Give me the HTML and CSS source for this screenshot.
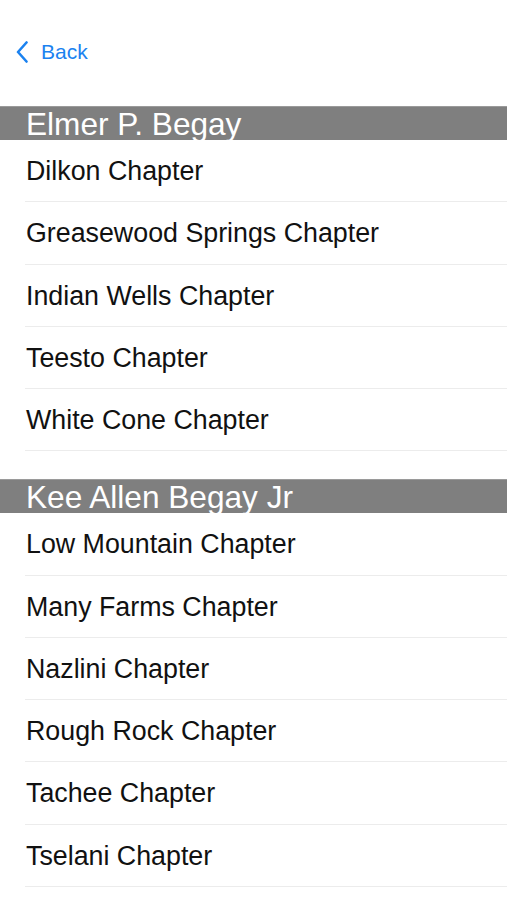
FILE: index.html
```html
<!DOCTYPE html>
<html>
<head>
<meta charset="utf-8">
<link rel="stylesheet" href="styles.css">
</head>
<body>
<div class="nav">
  <a class="back">
    <svg class="chev" width="12" height="22" viewBox="0 0 12 22"><path d="M10.5 1.5 L2 11 L10.5 20.5" fill="none" stroke="#1b82f0" stroke-width="2.6" stroke-linecap="round" stroke-linejoin="round"/></svg>
    <span>Back</span>
  </a>
</div>
<div class="section">
  <div class="header">Elmer P. Begay</div>
  <div class="row">Dilkon Chapter</div>
  <div class="row">Greasewood Springs Chapter</div>
  <div class="row">Indian Wells Chapter</div>
  <div class="row">Teesto Chapter</div>
  <div class="row">White Cone Chapter</div>
</div>
<div class="section">
  <div class="header">Kee Allen Begay Jr</div>
  <div class="row">Low Mountain Chapter</div>
  <div class="row">Many Farms Chapter</div>
  <div class="row">Nazlini Chapter</div>
  <div class="row">Rough Rock Chapter</div>
  <div class="row">Tachee Chapter</div>
  <div class="row">Tselani Chapter</div>
</div>
</body>
</html>
```
FILE: styles.css
```css
html, body {
  margin: 0;
  padding: 0;
  background: #ffffff;
  font-family: "Liberation Sans", Arial, sans-serif;
}
.nav {
  height: 106px;
  box-sizing: border-box;
  padding: 41px 0 0 16px;
}
.back {
  display: flex;
  align-items: center;
  gap: 13px;
  color: #1b82f0;
  font-size: 21px;
  height: 22px;
}
.chev {
  display: block;
}
.section + .section {
  margin-top: 28px;
}
.header {
  height: 34px;
  line-height: 34px;
  background: #7f7f7f;
  border-top: 1px solid #9a9a9a;
  box-sizing: border-box;
  color: #ffffff;
  font-size: 31.6px;
  padding-left: 26px;
  white-space: nowrap;
}
.row {
  height: 62.25px;
  box-sizing: border-box;
  margin-left: 25px;
  border-bottom: 1px solid #ececec;
  display: flex;
  align-items: center;
  padding-left: 1px;
  padding-top: 2px;
  font-size: 26.8px;
  color: #111111;
}
```
